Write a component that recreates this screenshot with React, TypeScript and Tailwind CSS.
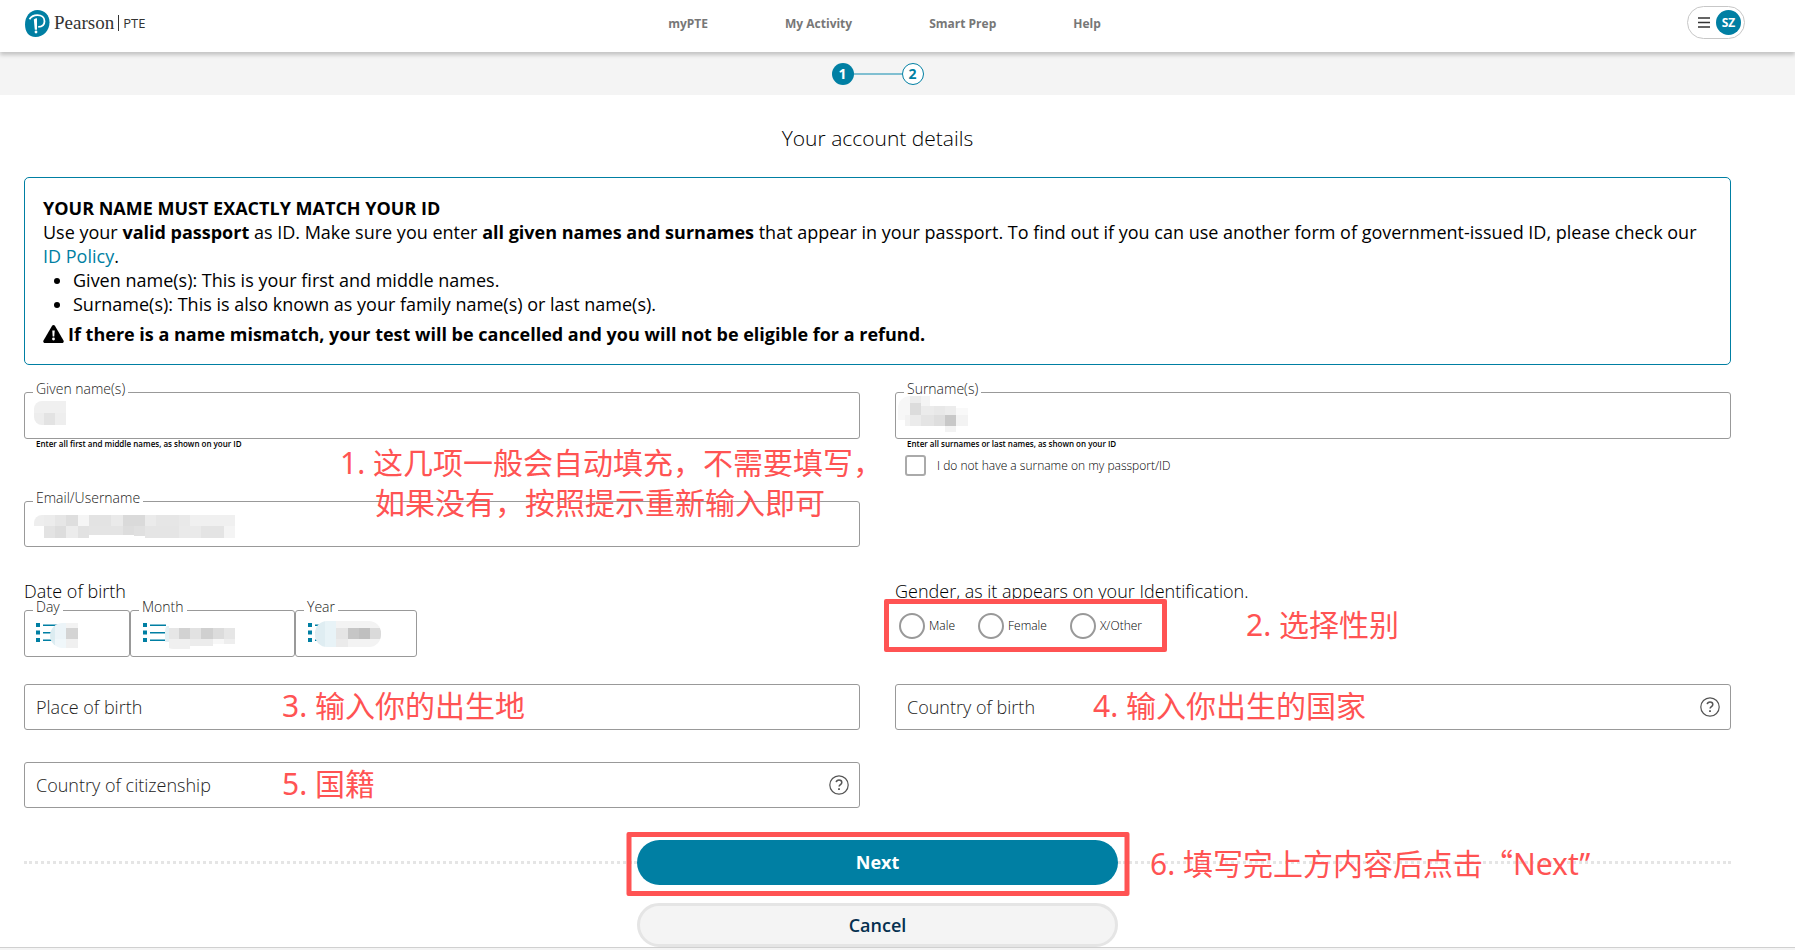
import React, { useState } from "react";

type Block = [x: number, y: number, w: number, h: number, fill: string];

const navItems = ["myPTE", "My Activity", "Smart Prep", "Help"];

const givenBlocks: Block[] = [
  [0, 0, 10, 12, "#f0f0f0"],
  [10, 0, 22, 12, "#f0f0f0"],
  [0, 12, 10, 12, "#ededed"],
  [10, 12, 11, 12, "#e3e3e3"],
  [21, 12, 11, 12, "#eeeeee"],
];

const surnameBlocks: Block[] = [
  [0, 0, 12, 24, "#f7f7f7"],
  [12, 0, 11, 7, "#ececec"],
  [23, 0, 9, 10, "#f4f4f4"],
  [12, 7, 11, 12, "#dcdcdc"],
  [23, 10, 13, 9, "#ebebeb"],
  [36, 10, 11, 9, "#e8e8e8"],
  [47, 10, 11, 9, "#ececec"],
  [58, 12, 12, 7, "#f9f9f9"],
  [7, 19, 5, 11, "#f2f2f2"],
  [12, 19, 11, 11, "#ebebeb"],
  [23, 19, 13, 11, "#e4e4e4"],
  [36, 19, 11, 11, "#dedede"],
  [47, 19, 11, 11, "#c8c8c8"],
  [58, 19, 12, 11, "#f3f3f3"],
  [47, 30, 11, 6, "#f3f3f3"],
];

const emailBlocks: Block[] = [
  [0, 0, 10, 11, "#eeeeee"],
  [10, 0, 11, 11, "#ececec"],
  [21, 0, 11, 11, "#e6e6e6"],
  [32, 0, 12, 11, "#dedede"],
  [44, 0, 11, 11, "#f5f5f5"],
  [55, 0, 22, 11, "#e3e3e3"],
  [77, 0, 12, 11, "#eaeaea"],
  [89, 0, 22, 11, "#dadada"],
  [111, 0, 11, 11, "#ebebeb"],
  [122, 0, 23, 11, "#e6e6e6"],
  [145, 0, 11, 11, "#e9e9e9"],
  [156, 0, 45, 11, "#f0f0f0"],
  [10, 11, 11, 12, "#e3e3e3"],
  [21, 11, 11, 12, "#dddddd"],
  [32, 11, 12, 12, "#ececec"],
  [44, 11, 11, 12, "#e2e2e2"],
  [55, 11, 34, 9, "#e4e4e4"],
  [89, 11, 11, 9, "#dddddd"],
  [100, 11, 11, 10, "#e0e0e0"],
  [111, 11, 34, 12, "#e5e5e5"],
  [145, 11, 22, 12, "#eaeaea"],
  [167, 11, 23, 12, "#e4e4e4"],
  [190, 11, 11, 12, "#f4f4f4"],
];

const dayBlocks: Block[] = [
  [0, 0, 5, 25, "#dcecf1"],
  [5, 0, 11, 16, "#ecf4f8"],
  [5, 16, 11, 9, "#f0f7fa"],
  [16, 0, 12, 5, "#f3f3f3"],
  [16, 5, 12, 11, "#d4d4d4"],
  [16, 16, 12, 9, "#f0f0f0"],
];

const monthBlocks: Block[] = [
  [0, 3, 4, 16, "#e4f0f4"],
  [4, 5, 10, 11, "#e6e6e6"],
  [14, 5, 11, 11, "#d2d2d2"],
  [25, 5, 11, 11, "#e2e2e2"],
  [36, 5, 12, 11, "#d0d0d0"],
  [48, 5, 11, 11, "#dcdcdc"],
  [59, 5, 11, 11, "#e6e6e6"],
  [4, 16, 21, 10, "#f0f0f0"],
  [25, 16, 23, 7, "#ececec"],
  [48, 16, 11, 5, "#f7f7f7"],
  [59, 16, 11, 5, "#eeeeee"],
];

const yearBlocks: Block[] = [
  [0, 0, 10, 26, "#dfedf2"],
  [10, 0, 11, 26, "#e8f3f7"],
  [21, 0, 45, 7, "#f3f3f3"],
  [21, 7, 12, 11, "#e5e5e5"],
  [33, 7, 11, 11, "#c6c6c6"],
  [44, 7, 11, 11, "#bfbfbf"],
  [55, 7, 11, 11, "#dadada"],
  [21, 18, 12, 8, "#ebebeb"],
  [33, 18, 33, 8, "#f3f3f3"],
];

const Redacted: React.FC<{ blocks: Block[]; className: string }> = ({
  blocks,
  className,
}) => {
  const w = Math.max(...blocks.map((b) => b[0] + b[2]));
  const h = Math.max(...blocks.map((b) => b[1] + b[3]));
  return (
    <svg
      width={w}
      height={h}
      shapeRendering="crispEdges"
      aria-hidden="true"
      className={`pointer-events-none absolute ${className}`}
    >
      {blocks.map(([x, y, bw, bh, fill], i) => (
        <rect key={i} x={x} y={y} width={bw} height={bh} fill={fill} />
      ))}
    </svg>
  );
};

const Note: React.FC<{ className: string; children: React.ReactNode }> = ({
  className,
  children,
}) => (
  <p
    lang="zh-CN"
    className={`pointer-events-none absolute z-10 whitespace-pre text-[30px] leading-10 text-[#ff5353] font-['Noto_Sans','Noto_Sans_CJK_SC',sans-serif] ${className}`}
  >
    {children}
  </p>
);

const HelpButton: React.FC<{ label: string }> = ({ label }) => (
  <button
    type="button"
    aria-label={label}
    className="absolute right-2.5 top-1/2 -translate-y-1/2 text-[#555]"
  >
    <svg width="20" height="20" viewBox="0 0 20 20" fill="none" stroke="currentColor">
      <circle cx="10" cy="10" r="9.2" strokeWidth="1.2" />
      <path d="M7.2 7.2c.3-1.4 1.4-2.1 2.8-2.1 1.6 0 2.8.9 2.8 2.3 0 2.2-2.7 2.1-2.7 4.2" strokeWidth="1.5" />
      <path d="M10 13.2v1.8" strokeWidth="1.8" />
    </svg>
  </button>
);

const ListIcon = () => (
  <svg width="23" height="19" viewBox="0 0 23 19" fill="#007fa3" aria-hidden="true">
    <path d="M0 0h4v4H0zM0 7.5h4v4H0zM0 15h4v4H0zM7 1.500h16v1.500H7zM7 9h16v1.500H7zM7 16.500h16v1.500H7z" />
  </svg>
);

const FloatLabel: React.FC<{ htmlFor: string; children: React.ReactNode }> = ({
  htmlFor,
  children,
}) => (
  <label
    htmlFor={htmlFor}
    className="absolute left-2 -top-3 bg-white px-[3px] text-sm leading-4 font-light text-[#222]"
  >
    {children}
  </label>
);

const box = "relative rounded-[3px] border border-[#999]";
const inputClass =
  "h-full w-full bg-transparent px-[11px] text-[18px] font-light text-[#222] outline-none placeholder:text-[#222] placeholder:opacity-100";

const App: React.FC = () => {
  const [gender, setGender] = useState("");
  const [noSurname, setNoSurname] = useState(false);

  return (
    <div className="min-h-screen bg-white text-black font-['Open_Sans',sans-serif]">
      {/* Header */}
      <header className="relative z-10 grid h-[52px] grid-cols-[1fr_auto_1fr] items-start bg-white pl-6 pr-[50px] shadow-[0_3px_4px_rgba(0,0,0,0.2)]">
        <a href="#" aria-label="Pearson PTE" className="mt-[9px] flex items-center text-[#333]">
          <svg width="26" height="27" viewBox="0 0 26 27" aria-hidden="true">
            <path
              d="M13.5 0C20.500 0 25.500 5 25.500 12.200c0 8-6 14.800-14 14.800C4.500 27 1 21.500 1 14.500 1 6.500 6 0 13.500 0z"
              fill="#007fa3"
            />
            <path
              d="M5.500 9.200c1.800-2.700 4.600-4 7.800-4 4.200 0 7.200 2.300 7.200 6 0 3.400-2.700 5.500-6.300 5.700"
              fill="none"
              stroke="#fff"
              strokeWidth="1.8"
            />
            <path d="M9.800 9.500c1-.8 2-1.200 3.200-1.200v11.400h-2.200z" fill="#fff" />
            <circle cx="12" cy="22" r="1.4" fill="#fff" />
          </svg>
          <span className="ml-1 text-[19px] leading-7 font-['Liberation_Serif',serif]">Pearson</span>
          <span className="ml-1 h-4 w-px bg-[#333]" />
          <span className="ml-1 text-[13px] leading-7 font-medium">PTE</span>
        </a>
        <nav className="mt-4 flex gap-[77px] text-xs leading-4 font-bold text-[#777]">
          {navItems.map((item) => (
            <a key={item} href="#">
              {item}
            </a>
          ))}
        </nav>
        <button
          type="button"
          aria-label="Open account menu"
          className="mt-1.5 flex h-[33px] w-[58px] items-center justify-between justify-self-end rounded-full border border-[#c7c7c7] pl-2.5 pr-[3px]"
        >
          <svg width="12" height="11" viewBox="0 0 12 11" stroke="#333" strokeWidth="1.3">
            <path d="M0 1h12M0 5.500h12M0 10h12" />
          </svg>
          <span className="flex size-[25px] items-center justify-center rounded-full bg-[#007fa3] text-xs font-bold text-white">
            SZ
          </span>
        </button>
      </header>

      {/* Progress steps */}
      <div className="flex h-[43px] items-center justify-center bg-[#f4f4f4] pr-10 text-sm font-bold">
        <span className="flex size-[22px] items-center justify-center rounded-full bg-[#007fa3] text-white">
          1
        </span>
        <span className="h-0.5 w-12 bg-[#80bfd1]" />
        <span className="flex size-[22px] items-center justify-center rounded-full border border-[#007fa3] bg-white text-[#007fa3]">
          2
        </span>
      </div>

      <main className="pl-6 pr-16">
        <h1 className="pt-[27px] text-center text-[21px] leading-8 font-light">
          Your account details
        </h1>

        {/* Name policy */}
        <section className="mt-[23px] rounded-[5px] border border-[#007fa3] px-[18px] py-[18px] text-[18px] leading-6">
          <p className="font-bold">YOUR NAME MUST EXACTLY MATCH YOUR ID</p>
          <p>
            Use your <b className="font-bold">valid passport</b> as ID. Make sure you enter{" "}
            <b className="font-bold">all given names and surnames</b> that appear in your passport. To
            find out if you can use another form of government-issued ID, please check our{" "}
            <a href="#" className="text-[#007fa3]">
              ID Policy
            </a>
            .
          </p>
          <ul className="list-disc pl-[30px]">
            <li>Given name(s): This is your first and middle names.</li>
            <li>Surname(s): This is also known as your family name(s) or last name(s).</li>
          </ul>
          <p className="mt-1.5 flex items-center gap-1 font-bold">
            <svg width="21" height="18" viewBox="0 0 21 18" aria-hidden="true">
              <path d="M10.500 0c.6 0 1.100.3 1.400.8l8.600 14.700c.7 1.200-.1 2.500-1.400 2.500H1.900C.6 18-.2 16.700.5 15.500L9.100.8c.3-.5.8-.8 1.400-.8z" />
              <path d="M9.300 5.500h2.400l-.4 6H9.700z" fill="#fff" />
              <circle cx="10.5" cy="14" r="1.4" fill="#fff" />
            </svg>
            If there is a name mismatch, your test will be cancelled and you will not be eligible for
            a refund.
          </p>
        </section>

        <form onSubmit={(e) => e.preventDefault()}>
          <div className="mt-[27px] grid grid-cols-2 gap-x-[35px]">
            <div className="relative h-[109px]">
              <div className={`${box} h-[47px]`}>
                <FloatLabel htmlFor="given">Given name(s)</FloatLabel>
                <input id="given" type="text" className={inputClass} />
                <Redacted blocks={givenBlocks} className="left-[9px] top-2 rounded-l-lg" />
              </div>
              <p className="ml-3 text-[8px] leading-[10px] font-semibold">
                Enter all first and middle names, as shown on your ID
              </p>
              <Note className="left-[316px] top-[51px]">
                {"1. 这几项一般会自动填充，不需要填写，"}
              </Note>
              <Note className="left-[351px] top-[91px]">如果没有，按照提示重新输入即可</Note>
            </div>
            <div>
              <div className={`${box} h-[47px]`}>
                <FloatLabel htmlFor="surname">Surname(s)</FloatLabel>
                <input id="surname" type="text" className={inputClass} />
                <Redacted blocks={surnameBlocks} className="left-0.5 top-[3px] rounded-l-xl" />
              </div>
              <p className="ml-3 text-[8px] leading-[10px] font-semibold">
                Enter all surnames or last names, as shown on your ID
              </p>
              <label className="ml-2.5 mt-1.5 flex items-center gap-[11px] text-xs leading-5 font-light">
                <input
                  type="checkbox"
                  checked={noSurname}
                  onChange={(e) => setNoSurname(e.target.checked)}
                  className="size-[21px] appearance-none rounded-[3px] border-2 border-[#aaa] checked:bg-[#007fa3]"
                />
                I do not have a surname on my passport/ID
              </label>
            </div>

            <div className={`${box} h-[46px]`}>
              <FloatLabel htmlFor="email">Email/Username</FloatLabel>
              <input id="email" type="text" className={inputClass} />
              <Redacted blocks={emailBlocks} className="left-[9px] top-[13px] rounded-l-lg" />
            </div>
          </div>

          <div className="mt-8 grid grid-cols-2 gap-x-[35px]">
            <fieldset>
              <legend className="text-[18px] leading-6 font-light">Date of birth</legend>
              <div className="mt-[7px] flex">
                <div className={`${box} h-[47px] w-[106px]`}>
                  <FloatLabel htmlFor="day">Day</FloatLabel>
                  <div className="absolute left-[11px] top-3">
                    <ListIcon />
                  </div>
                  <select id="day" className="relative h-full w-full appearance-none outline-none">
                    <option></option>
                  </select>
                  <Redacted blocks={dayBlocks} className="left-[25px] top-3 rounded-l-full" />
                </div>
                <div className={`${box} h-[47px] w-[165px]`}>
                  <FloatLabel htmlFor="month">Month</FloatLabel>
                  <div className="absolute left-3 top-3">
                    <ListIcon />
                  </div>
                  <select id="month" className="relative h-full w-full appearance-none outline-none">
                    <option></option>
                  </select>
                  <Redacted blocks={monthBlocks} className="left-[34px] top-3 rounded-l-lg" />
                </div>
                <div className={`${box} h-[47px] w-[122px]`}>
                  <FloatLabel htmlFor="year">Year</FloatLabel>
                  <div className="absolute left-3 top-3">
                    <ListIcon />
                  </div>
                  <select id="year" className="relative h-full w-full appearance-none outline-none">
                    <option></option>
                  </select>
                  <Redacted blocks={yearBlocks} className="left-[19px] top-2.5 rounded-xl" />
                </div>
              </div>
            </fieldset>
            <fieldset>
              <legend className="text-[18px] leading-6 font-light">
                Gender, as it appears on your Identification.
              </legend>
              <div className="relative pt-[9px]">
                <div className="ml-1 flex h-[28px] items-center gap-[23px] text-xs font-light">
                  {["Male", "Female", "X/Other"].map((item) => (
                    <label key={item} className="flex items-center gap-1">
                      <input
                        type="radio"
                        name="gender"
                        checked={gender === item}
                        onChange={() => setGender(item)}
                        className="size-[26px] appearance-none rounded-full border-2 border-[#999] checked:bg-[#007fa3]"
                      />
                      {item}
                    </label>
                  ))}
                </div>
                <div className="pointer-events-none absolute -left-[11px] -top-1 h-[53px] w-[283px] rounded-[2px] border-[5px] border-[#ff5353]" />
                <Note className="left-[351px] top-0.5">2. 选择性别</Note>
              </div>
            </fieldset>
          </div>

          <div className="mt-[27px] grid grid-cols-2 gap-x-[35px] gap-y-8">
            <div className={`${box} h-[46px]`}>
              <input aria-label="Place of birth" placeholder="Place of birth" className={inputClass} />
              <Note className="left-[257px] top-px">3. 输入你的出生地</Note>
            </div>
            <div className={`${box} h-[46px]`}>
              <input
                aria-label="Country of birth"
                placeholder="Country of birth"
                className={inputClass}
              />
              <HelpButton label="Help with country of birth" />
              <Note className="left-[197px] top-px">4. 输入你出生的国家</Note>
            </div>
            <div className={`${box} h-[46px]`}>
              <input
                aria-label="Country of citizenship"
                placeholder="Country of citizenship"
                className={inputClass}
              />
              <HelpButton label="Help with country of citizenship" />
              <Note className="left-[257px] top-px">5. 国籍</Note>
            </div>
          </div>

          {/* Actions */}
          <div className="relative mt-8 flex items-center">
            <div className="flex-1 border-t-[3px] border-dotted border-[#e5e5e5]" />
            <button
              type="submit"
              className="h-[45px] w-[481px] rounded-full bg-[#007fa3] text-[18px] font-bold text-white"
            >
              Next
            </button>
            <div className="relative flex-1 border-t-[3px] border-dotted border-[#e5e5e5]">
              <Note className="left-8 -top-[22px]">
                6. 填写完上方内容后点击
                <span className="font-['Noto_Sans_CJK_SC',sans-serif]">“</span>Next”
              </Note>
            </div>
            <div className="pointer-events-none absolute left-1/2 -top-2 h-[64px] w-[503px] -translate-x-1/2 rounded-[2px] border-[5px] border-[#ff5353]" />
          </div>
          <button
            type="button"
            className="mx-auto mt-[18px] block h-[44px] w-[481px] rounded-full border-[3px] border-[#e5e5e5] bg-[#f4f4f4] text-[18px] font-semibold text-[#05304f]"
          >
            Cancel
          </button>
        </form>
      </main>
      <footer className="h-[3px] border-t border-[#d0d0d0] bg-[#f4f4f4]" />
    </div>
  );
};

export default App;
